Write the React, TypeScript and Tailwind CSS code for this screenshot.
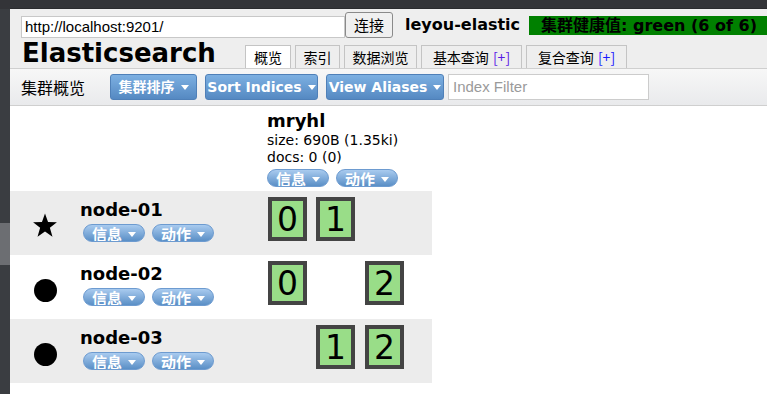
import React from "react";

const F = { fontFamily: '"DejaVu Sans", "Noto Sans CJK SC", sans-serif' };

function Caret() {
  return <span className="inline-block w-0 h-0 border-l-[4px] border-r-[4px] border-t-[5px] border-l-transparent border-r-transparent border-t-white ml-[6px] align-middle" />;
}

function Pill({ label }: { label: string }) {
  return (
    <div className="w-[62px] h-[18px] rounded-full border border-[#6d9bd0] bg-gradient-to-b from-[#a9cbef] to-[#5a8fc6] overflow-hidden flex justify-center">
      <span className="text-white font-bold text-[15px] leading-[18px] mt-[3px] whitespace-nowrap flex items-center" style={F}>
        {label}
        <Caret />
      </span>
    </div>
  );
}

function BlueBtn({ label, w }: { label: string; w: string }) {
  return (
    <div className={`${w} h-[26px] rounded-[3px] border border-[#4f80b8] bg-gradient-to-b from-[#7db0e2] to-[#5589c2] flex items-center justify-center text-white font-bold text-[14px] whitespace-nowrap`} style={F}>
      {label}
      <Caret />
    </div>
  );
}

function Shard({ n }: { n?: string }) {
  if (!n) return <div className="w-[39px] h-[44px]" />;
  return (
    <div className="w-[39px] h-[44px] border-[4px] border-[#444444] bg-[#99dd88] flex items-center justify-center text-[33px] leading-none text-black" style={F}>
      {n}
    </div>
  );
}

function Star() {
  return (
    <svg width="26" height="25" viewBox="0 0 24 23">
      <polygon points="12,0.5 14.8,8.3 23,8.5 16.5,13.6 18.9,21.8 12,17 5.1,21.8 7.5,13.6 1,8.5 9.2,8.3" fill="#000" />
    </svg>
  );
}

function NodeRow({ name, star, shards, gray }: { name: string; star?: boolean; shards: (string | undefined)[]; gray: boolean }) {
  return (
    <div className={`h-[64px] w-[422px] flex ${gray ? "bg-[#ececec]" : "bg-white"}`}>
      <div className="w-[70px] flex items-center justify-center pt-[4px]">
        {star ? <Star /> : <div className="w-[23px] h-[23px] rounded-full bg-black mt-[2px]" />}
      </div>
      <div className="w-[187px] pt-[8px]">
        <div className="text-[18px] font-bold leading-[22px] text-black whitespace-nowrap" style={F}>{name}</div>
        <div className="flex gap-[7px] ml-[3px] mt-[3px]">
          <Pill label="信息" />
          <Pill label="动作" />
        </div>
      </div>
      <div className="flex pt-[6px] ml-[1px]">
        <div className="w-[48px]"><Shard n={shards[0]} /></div>
        <div className="w-[49px]"><Shard n={shards[1]} /></div>
        <div className="w-[48px]"><Shard n={shards[2]} /></div>
      </div>
    </div>
  );
}

export default function App() {
  return (
    <div className="w-[767px] h-[394px] overflow-hidden flex bg-white" style={F}>
      <div className="w-[10px] h-full bg-[#3a3d41] flex flex-col shrink-0">
        <div className="h-[9px] bg-[#333438]" />
        <div className="h-[214px]" />
        <div className="h-[42px] bg-[#6c6e72]" />
      </div>
      <div className="flex-1 flex flex-col min-w-0">
        <div className="h-[9px] bg-[#333438] border-b border-[#2a2b2e]" />
        {/* header */}
        <div className="h-[59px] bg-[#eeeeee] flex flex-col">
          <div className="flex items-start h-[29px] pt-[3px]">
            <div className="shrink-0 ml-[11px] mt-[4px] w-[324px] h-[22px] bg-white border border-[#c8c8c8] flex items-center px-[3px] text-[15px] text-black" style={{ fontFamily: '"Liberation Sans", Arial, sans-serif' }}>
              http://localhost:9201/
            </div>
            <div className="shrink-0 w-[48px] h-[26px] border border-[#8a8a8a] rounded-[3px] bg-[#f0f0f0] flex items-center justify-center text-[15px] text-black" style={{ fontFamily: '"Noto Sans CJK SC", sans-serif' }}>
              连接
            </div>
            <div className="shrink-0 ml-[12px] mt-[3px] w-[112px] text-[16px] font-bold leading-[20px] text-black whitespace-nowrap">leyou-elastic</div>
            <div className="ml-[12px] mt-[4px] flex-1 h-[19px] bg-[#008000] text-[16px] font-bold leading-[19px] text-black pl-[12px] whitespace-nowrap overflow-hidden">
              集群健康值: green (6 of 6)
            </div>
          </div>
          <div className="flex items-end flex-1">
            <div className="ml-[12px] w-[223px] text-[26px] font-bold leading-[30px] text-black whitespace-nowrap">Elasticsearch</div>
            <div className="flex gap-[4px] items-end">
              {[
                { t: "概览", w: "w-[46px]", active: true },
                { t: "索引", w: "w-[45px]" },
                { t: "数据浏览", w: "w-[73px]" },
                { t: "基本查询", w: "w-[101px]", plus: "text-[#5a1ae6]" },
                { t: "复合查询", w: "w-[101px]", plus: "text-[#1a1aff]" },
              ].map((tab) => (
                <div key={tab.t} className={`${tab.w} h-[23px] border border-b-0 border-[#c4c4c4] ${tab.active ? "bg-white" : "bg-[#eeeeee]"} flex items-center justify-center text-[14px] text-black whitespace-nowrap`} style={{ fontFamily: '"Noto Sans CJK SC", sans-serif' }}>
                  {tab.t}
                  {tab.plus && <span className={`${tab.plus} ml-[4px]`}>[+]</span>}
                </div>
              ))}
            </div>
          </div>
        </div>
        {/* toolbar */}
        <div className="h-[38px] border-t border-[#cfcfcf] border-b bg-gradient-to-b from-[#f7f7f7] to-[#e9eaec] flex items-center">
          <div className="ml-[11px] w-[89px] text-[16px] text-black" style={{ fontFamily: '"Noto Sans CJK SC", sans-serif' }}>集群概览</div>
          <div className="flex gap-[8px] items-center">
            <BlueBtn label="集群排序" w="w-[87px]" />
            <BlueBtn label="Sort Indices" w="w-[113px]" />
            <BlueBtn label="View Aliases" w="w-[118px]" />
          </div>
          <div className="ml-[4px] w-[201px] h-[26px] bg-white border border-[#cccccc] flex items-center px-[4px] text-[15px] text-[#9a9a9a]" style={{ fontFamily: '"Liberation Sans", Arial, sans-serif' }}>
            Index Filter
          </div>
        </div>
        {/* content */}
        <div className="flex-1 bg-white">
          <div className="h-[85px] flex">
            <div className="w-[257px]" />
            <div className="pt-[4px]">
              <div className="text-[18px] font-bold leading-[21px] text-black">mryhl</div>
              <div className="text-[14px] leading-[17px] text-black mt-[1px]">size: 690B (1.35ki)</div>
              <div className="text-[14px] leading-[17px] text-black">docs: 0 (0)</div>
              <div className="flex gap-[7px] mt-[3px]">
                <Pill label="信息" />
                <Pill label="动作" />
              </div>
            </div>
          </div>
          <NodeRow name="node-01" star shards={["0", "1", undefined]} gray />
          <NodeRow name="node-02" shards={["0", undefined, "2"]} gray={false} />
          <NodeRow name="node-03" shards={[undefined, "1", "2"]} gray />
        </div>
      </div>
    </div>
  );
}
